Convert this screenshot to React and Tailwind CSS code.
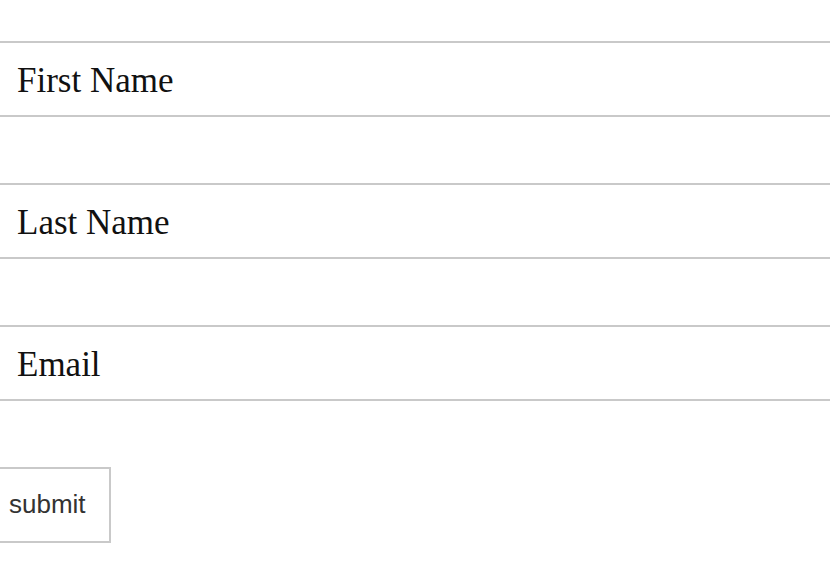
import React from 'react';

const fields = ['First Name', 'Last Name', 'Email'];

const App = () => {
  return (
    <div className="w-[830px] h-[568px] bg-white overflow-hidden">
      <form className="flex flex-col pt-[41px] gap-[66px]" onSubmit={(e) => e.preventDefault()}>
        {fields.map((label) => (
          <input
            key={label}
            type="text"
            placeholder={label}
            className="block w-full h-[76px] border-y-2 border-x-0 border-[#c9c9c9] bg-white px-[17px] pt-[4px] text-[35px] text-[#111] placeholder:text-[#111] outline-none"
            style={{ fontFamily: '"Liberation Serif", "Times New Roman", serif' }}
          />
        ))}
        <div>
          <button
            type="submit"
            className="w-[111px] h-[76px] border-y-2 border-r-2 border-l-0 border-[#c9c9c9] bg-white pl-[9px] pr-[18px] pb-[2px] text-left text-[26px] text-[#333]"
            style={{ fontFamily: '"Liberation Sans", Arial, sans-serif' }}
          >
            submit
          </button>
        </div>
      </form>
    </div>
  );
};

export default App;
